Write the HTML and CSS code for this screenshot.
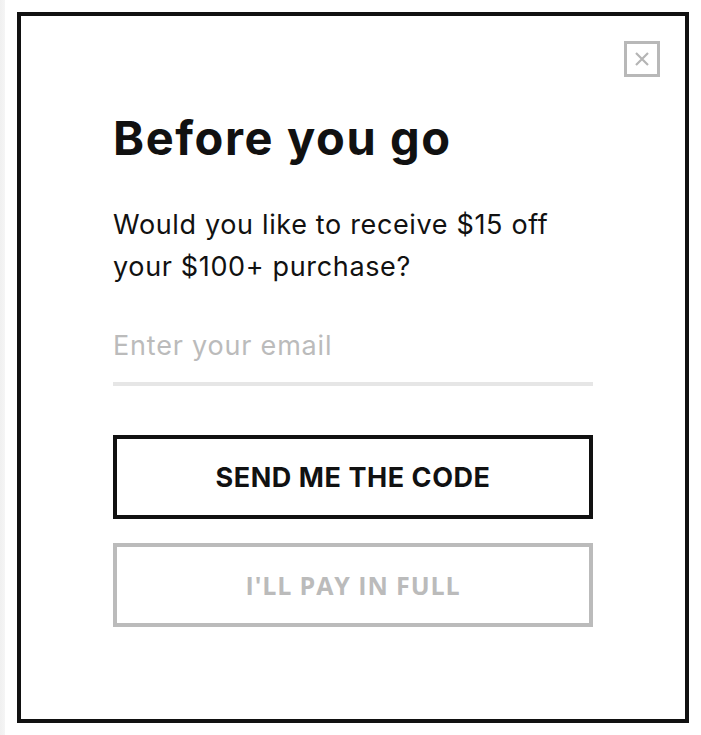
FILE: index.html
```html
<!DOCTYPE html>
<html lang="en">
<head>
<meta charset="utf-8">
<title>Before you go</title>
<link rel="stylesheet" href="styles.css">
</head>
<body>
<div class="page">
  <div class="strip"></div>
  <div class="modal">
    <button class="close" aria-label="Close">
      <svg width="14" height="14" viewBox="0 0 14 14"><path d="M1 1L13 13M13 1L1 13" stroke="#b5b5b5" stroke-width="2.2" fill="none"/></svg>
    </button>
    <div class="content">
      <h1 class="title">Before you go</h1>
      <p class="lead">Would you like to receive $15 off your $100+ purchase?</p>
      <div class="field">
        <input class="email" type="email" placeholder="Enter your email">
      </div>
      <button class="btn btn-primary">SEND ME THE CODE</button>
      <button class="btn btn-secondary">I'LL PAY IN FULL</button>
    </div>
  </div>
</div>
</body>
</html>
```
FILE: styles.css
```css
html, body {
  margin: 0;
  padding: 0;
  background: #fff;
}
.page {
  display: flex;
  align-items: flex-start;
  height: 735px;
}
.strip {
  width: 5px;
  height: 735px;
  background: linear-gradient(to right, #f0f0f0, #f5f5f5);
  flex: none;
}
.modal {
  position: relative;
  box-sizing: border-box;
  width: 672px;
  height: 711px;
  margin: 12px 0 0 12px;
  border: 4px solid #111;
  background: #fff;
  flex: none;
}
.close {
  position: absolute;
  top: 25px;
  right: 25px;
  box-sizing: border-box;
  width: 36px;
  height: 36px;
  border: 3px solid #b8b8b8;
  background: #fff;
  padding: 0;
  display: flex;
  align-items: center;
  justify-content: center;
  cursor: pointer;
}
.close svg { display: block; }
.content {
  padding: 94px 92px 0;
  display: flex;
  flex-direction: column;
  font-family: Inter, "Liberation Sans", sans-serif;
  color: #111;
}
.title {
  margin: 0;
  font-size: 47px;
  line-height: 55px;
  font-weight: 700;
  letter-spacing: 1.6px;
}
.lead {
  margin: 39px 0 0;
  font-size: 27px;
  line-height: 42px;
  font-weight: 400;
  letter-spacing: 0.65px;
}
.field {
  margin-top: 20px;
  border-bottom: 4px solid #e6e6e6;
}
.email {
  display: block;
  width: 100%;
  box-sizing: border-box;
  border: 0;
  outline: 0;
  padding: 0;
  height: 74px;
  font-family: inherit;
  font-size: 27px;
  letter-spacing: 0.8px;
  color: #111;
  background: transparent;
}
.email::placeholder { color: #bbb; }
.btn {
  box-sizing: border-box;
  width: 100%;
  height: 84px;
  background: #fff;
  font-family: Inter, "Liberation Sans", sans-serif;
  font-weight: 700;
  font-size: 27px;
  padding: 0;
}
.btn-primary {
  margin-top: 49px;
  border: 4px solid #111;
  color: #111;
  letter-spacing: 0.55px;
}
.btn-secondary {
  margin-top: 24px;
  border: 4px solid #bbb;
  color: #bbb;
  font-family: "Open Sans", "Noto Sans", sans-serif;
  font-size: 25px;
  letter-spacing: 0.9px;
}
```
